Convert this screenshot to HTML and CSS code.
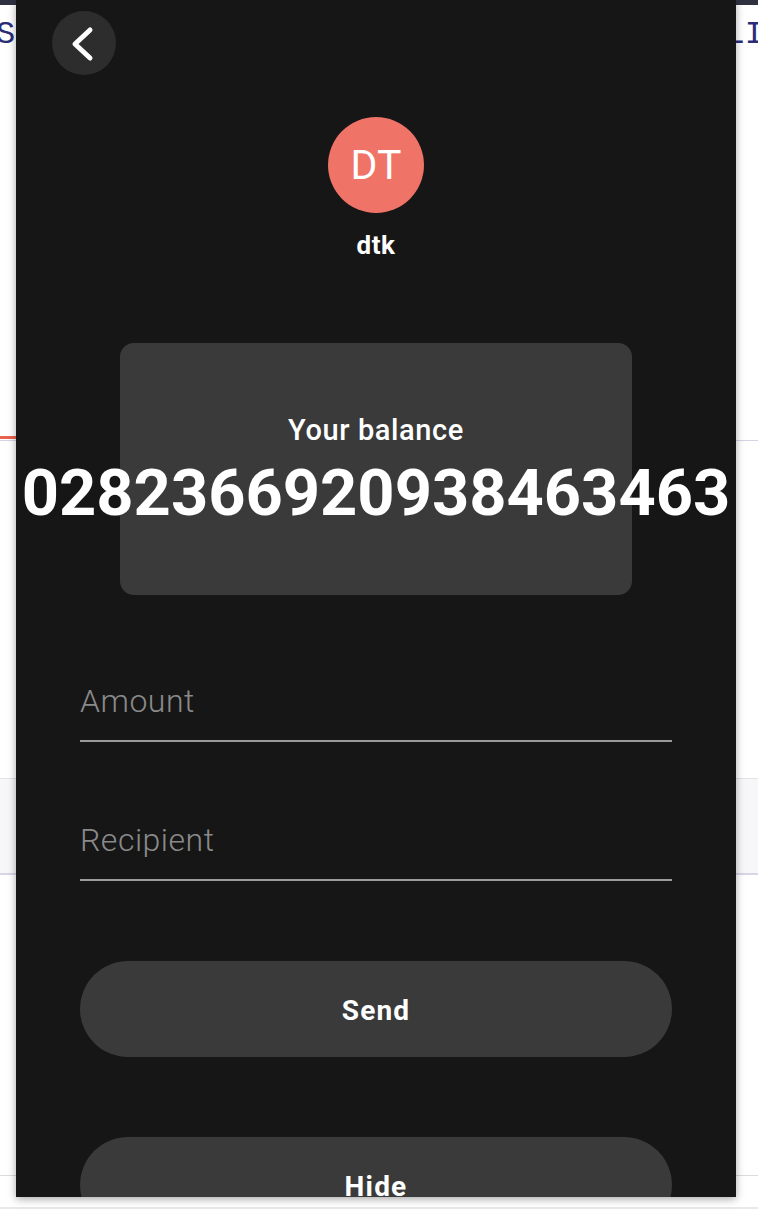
FILE: index.html
```html
<!DOCTYPE html>
<html lang="en">
<head>
<meta charset="utf-8">
<title>Send</title>
<link rel="stylesheet" href="styles.css">
</head>
<body>
<div class="page">
  <div class="topbar"></div>
  <div class="titlerow"><span class="tleft">SE</span><span class="tright">LI</span></div>
  <div class="tabs"><span class="tab-active"></span></div>
  <div class="spacer1"></div>
  <div class="graybox"></div>
  <div class="spacer2"></div>
  <div class="footer"></div>
</div>

<div class="panel">
  <button class="back" aria-label="Back">
    <svg width="64" height="64" viewBox="0 0 64 64"><path d="M38 19 L23 33 L38 47" fill="none" stroke="#fff" stroke-width="5" stroke-linecap="round" stroke-linejoin="round"/></svg>
  </button>
  <div class="avatar">DT</div>
  <div class="name">dtk</div>
  <div class="card">
    <div class="card-label">Your balance</div>
    <div class="card-value">0282366920938463463</div>
  </div>
  <div class="field first"><span class="ph">Amount</span></div>
  <div class="field second"><span class="ph">Recipient</span></div>
  <button class="btn send">Send</button>
  <button class="btn hide">Hide</button>
</div>
</body>
</html>
```

FILE: styles.css
```css
* { box-sizing: border-box; }
html, body { margin: 0; padding: 0; }
body {
  width: 758px;
  height: 1212px;
  overflow: hidden;
  background: #ffffff;
  font-family: Roboto, "Liberation Sans", sans-serif;
  position: relative;
}

.page { display: flex; flex-direction: column; height: 1212px; }
.topbar { height: 5px; background: #2f3140; }
.titlerow {
  height: 46px;
  padding-top: 14px;
  display: flex;
  justify-content: space-between;
  align-items: flex-start;
  font-family: "Liberation Mono", monospace;
  font-size: 32px;
  line-height: 32px;
  color: #2b2c78;
  overflow: hidden;
  white-space: nowrap;
}
.tleft { margin-left: -4px; flex-shrink: 0; }
.tright { margin-right: -6px; flex-shrink: 0; }
.tabs {
  margin-top: 385px;
  height: 5px;
  border-bottom: 1px solid #d4d4e4;
  position: relative;
}
.tab-active { display: block; width: 60px; height: 3px; background: #e8624f; }
.spacer1 { height: 338px; border-bottom: 1px solid #e2e2e6; }
.graybox { height: 96px; background: #f7f7fa; border-bottom: 2px solid #d6d6e6; }
.spacer2 { height: 301px; border-bottom: 1px solid #dcdcdc; }
.footer { height: 33px; border-bottom: 2px solid #e8e8e8; }

.panel {
  position: absolute;
  left: 16px;
  top: 0;
  width: 720px;
  height: 1197px;
  background: #161616;
  overflow: hidden;
  box-shadow: 0 2px 8px rgba(0,0,0,0.35);
  display: flex;
  flex-direction: column;
  align-items: center;
  padding: 11px 64px 0;
}

.back {
  align-self: flex-start;
  margin-left: -28px;
  width: 64px;
  height: 64px;
  border-radius: 50%;
  border: none;
  padding: 0;
  background: #2d2d2d;
  display: flex;
  align-items: center;
  justify-content: center;
  flex-shrink: 0;
}
.back svg { display: block; }

.avatar {
  margin-top: 42px;
  width: 96px;
  height: 96px;
  border-radius: 50%;
  background: #ef7366;
  color: #fff;
  font-size: 41px;
  display: flex;
  align-items: center;
  justify-content: center;
  flex-shrink: 0;
}
.name {
  margin-top: 17px;
  color: #fff;
  font-size: 26px;
  font-weight: 700;
  line-height: 30px;
  letter-spacing: 0.5px;
}

.card {
  margin-top: 83px;
  width: 512px;
  height: 252px;
  border-radius: 14px;
  background: #3a3a3a;
  display: flex;
  flex-direction: column;
  align-items: center;
  padding-top: 71px;
  flex-shrink: 0;
}
.card-label {
  color: #fff;
  font-size: 29px;
  font-weight: 500;
  line-height: 32px;
  letter-spacing: 0.6px;
}
.card-value {
  margin-top: 7px;
  color: #fff;
  font-size: 65px;
  font-weight: 700;
  line-height: 80px;
  white-space: nowrap;
}

.field {
  width: 100%;
  height: 60px;
  border-bottom: 2px solid #9a9a9a;
  flex-shrink: 0;
}
.field.first { margin-top: 87px; }
.field.second { margin-top: 79px; }
.ph {
  display: block;
  color: #8a8a8a;
  font-size: 32px;
  font-weight: 300;
  line-height: 38px;
  letter-spacing: 0.5px;
}

.btn {
  width: 100%;
  height: 96px;
  border-radius: 48px;
  border: none;
  background: #3a3a3a;
  color: #fff;
  font-family: Roboto, "Liberation Sans", sans-serif;
  font-size: 28px;
  font-weight: 700;
  letter-spacing: 1.2px;
  padding-top: 4px;
  flex-shrink: 0;
}
.btn.send { margin-top: 80px; }
.btn.hide { margin-top: 80px; }
```
